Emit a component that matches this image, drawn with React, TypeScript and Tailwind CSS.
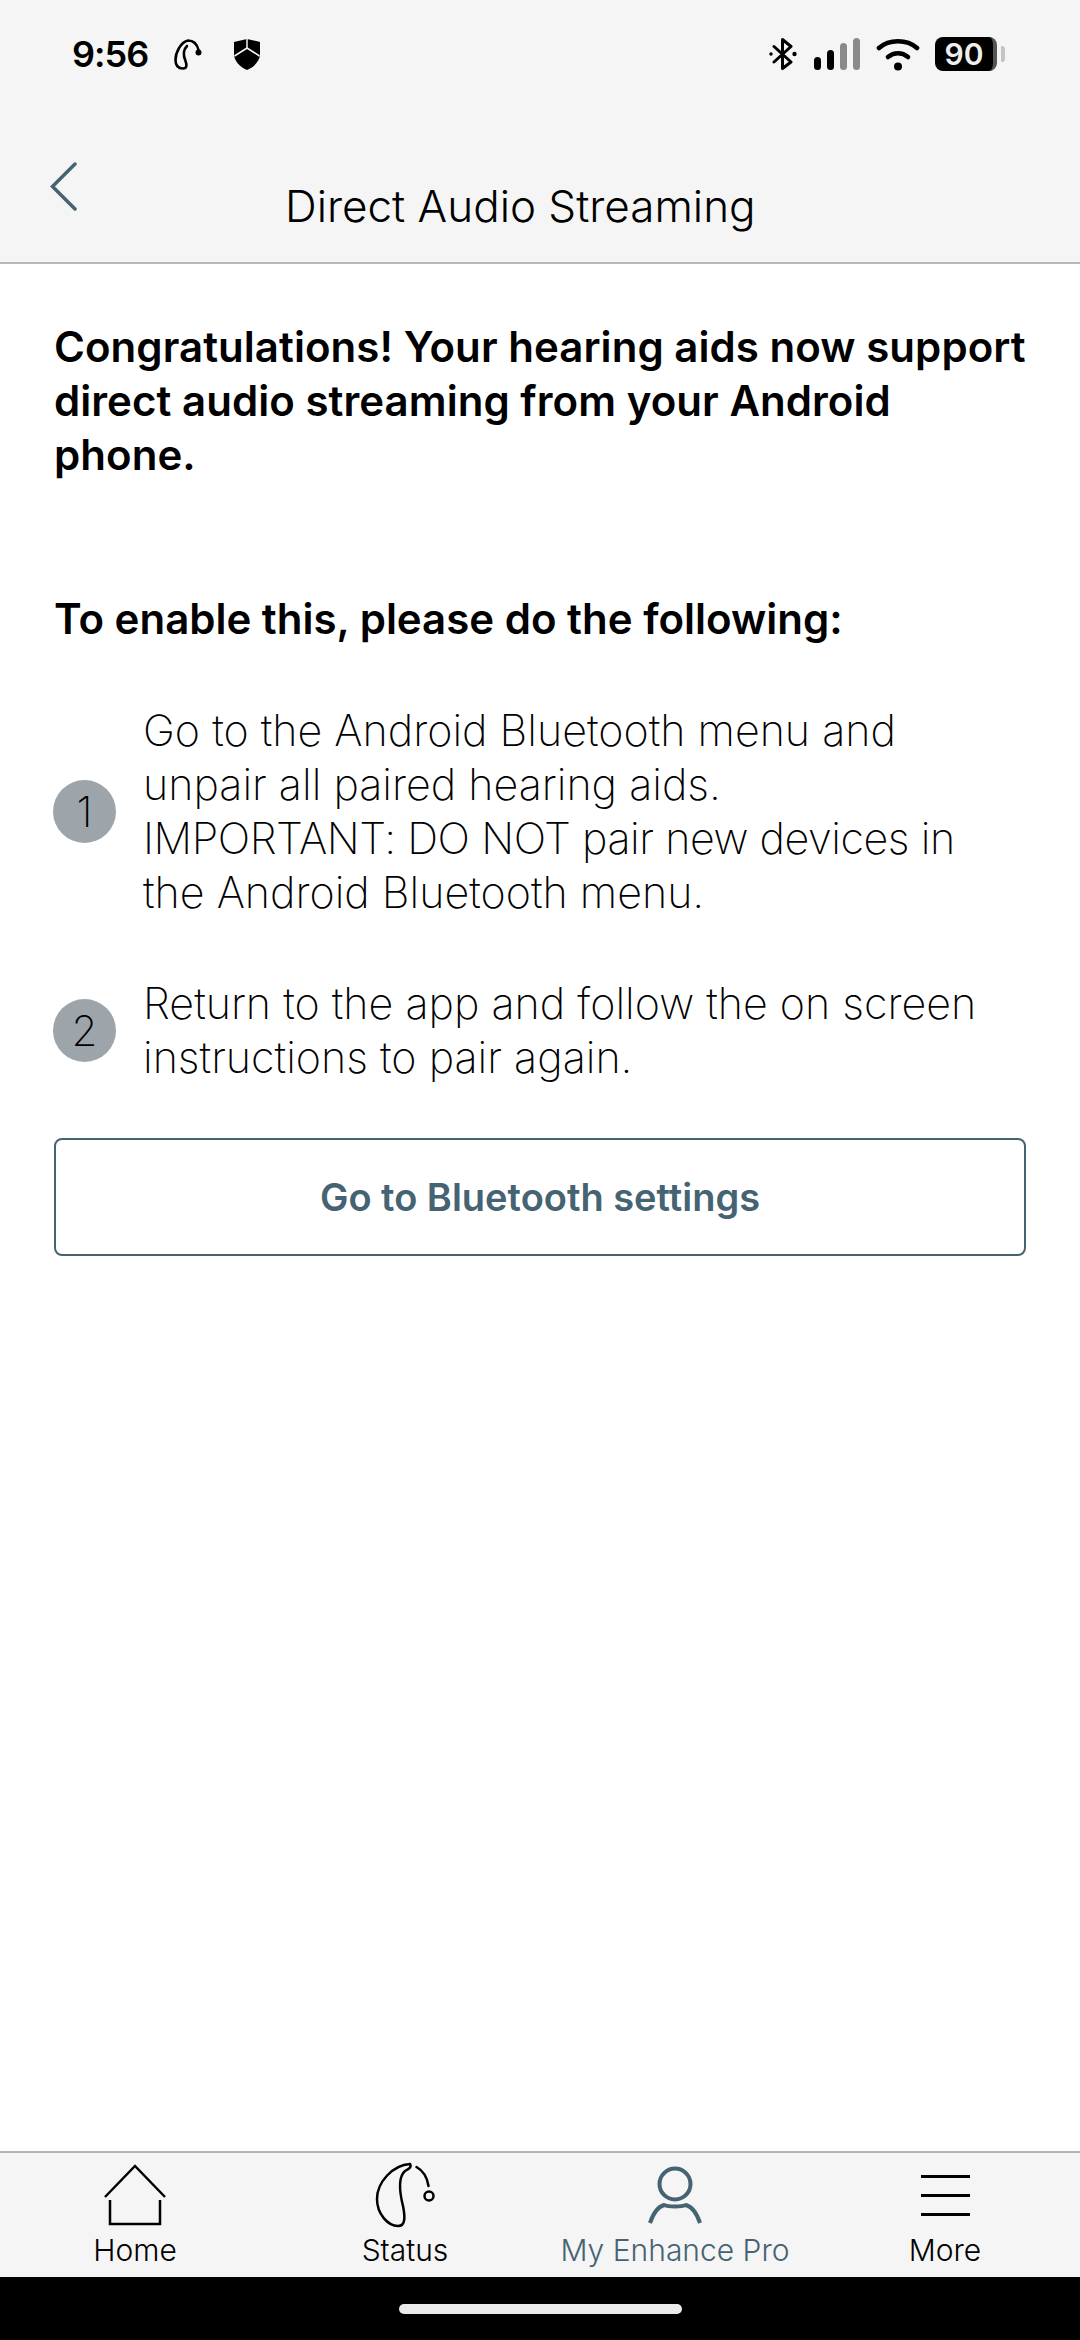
const slate = '#456372'

function BackChevron() {
  return (
    <svg width="30" height="50" viewBox="0 0 30 50" fill="none" stroke="#456372" strokeWidth="3.5" strokeLinecap="round" strokeLinejoin="miter">
      <path d="M26 3 L3.5 25.5 L26 48" />
    </svg>
  )
}

function StatusEar() {
  return (
    <svg width="28" height="31" viewBox="0 0 28 31" fill="none" stroke="#000" strokeWidth="2.6" strokeLinecap="round">
      <path d="M24.5 11 C23 5 19 1.5 14 1.5 C7 3 1.5 13 1.5 21 C1.5 26 4 29.5 9 29.5 C13 29.5 13 26 11.5 22 C9 16 9 11 13 7" />
      <circle cx="24.5" cy="13.5" r="3" fill="#000" stroke="none" />
    </svg>
  )
}

function StatusShield() {
  return (
    <svg width="26" height="31" viewBox="0 0 26 31">
      <path d="M13 0 C17 1 22 2 26 3 L26 15 C26 22 20 28 13 31 C6 28 0 22 0 15 L0 3 C4 2 9 1 13 0 Z" fill="#000" />
      <path d="M13 0 V9 M0.5 17 L13 9 L25.5 17" stroke="#f5f5f5" strokeWidth="1.5" fill="none" />
    </svg>
  )
}

function BluetoothGlyph() {
  return (
    <svg width="28" height="32" viewBox="0 0 28 32" fill="none" stroke="#000" strokeWidth="3" strokeLinejoin="round" strokeLinecap="round">
      <path d="M5 8.5 L22 24 L13.5 30.5 V1.5 L22 8.5 L5 24" />
      <circle cx="2" cy="16" r="1.7" fill="#000" stroke="none" />
      <circle cx="25.5" cy="16" r="2.2" fill="#000" stroke="none" />
    </svg>
  )
}

function SignalBars() {
  return (
    <div className="flex items-end gap-[6px] h-[32px]">
      <div className="w-[7px] h-[13px] rounded-full bg-black" />
      <div className="w-[7px] h-[20px] rounded-full bg-black" />
      <div className="w-[7px] h-[27px] rounded-full bg-[#8a8a8a]" />
      <div className="w-[7px] h-[32px] rounded-full bg-[#8a8a8a]" />
    </div>
  )
}

function WifiGlyph() {
  return (
    <svg width="44" height="33" viewBox="0 0 44 33" fill="none" stroke="#000" strokeLinecap="round">
      <path d="M3 10 C13 1 31 1 41 10" strokeWidth="4.6" />
      <path d="M12 19 C18 14 26 14 32 19" strokeWidth="4.6" />
      <circle cx="22" cy="28.5" r="4" fill="#000" stroke="none" />
    </svg>
  )
}

function BottomTab({ label, active, children }: { label: string; active?: boolean; children: React.ReactNode }) {
  return (
    <div className={`flex-1 flex flex-col items-center ${active ? 'text-[#456372]' : 'text-black'}`}>
      <div className="h-[68px] flex items-center justify-center">{children}</div>
      <span className="mt-[3px] text-[30px] leading-[36px] font-light">{label}</span>
    </div>
  )
}

export default function App() {
  return (
    <div className="w-[1080px] h-[2340px] flex flex-col bg-white text-black font-['Inter',sans-serif]">
      {/* status bar + title */}
      <div className="h-[264px] shrink-0 bg-[#f5f5f5] border-b-2 border-[#b8b8b8] flex flex-col">
        <div className="flex justify-between items-center pl-[72px] pr-[75px] pt-[20px] h-[88px]">
          <div className="flex items-center">
            <span className="text-[36px] leading-[36px] font-semibold tracking-[-1px]">9:56</span>
            <span className="ml-[26px] flex"><StatusEar /></span>
            <span className="ml-[32px] flex"><StatusShield /></span>
          </div>
          <div className="flex items-center">
            <BluetoothGlyph />
            <span className="ml-[17px]"><SignalBars /></span>
            <span className="ml-[16px]"><WifiGlyph /></span>
            <div className="ml-[15px] flex items-center">
              <div className="w-[62px] h-[34px] rounded-[8px] bg-black border-r-[4px] border-[#555555] text-[#eeeeee] text-[30px] leading-[34px] font-semibold text-center">90</div>
              <div className="ml-[4px] w-[4px] h-[16px] bg-[#c4c4c4] rounded-r-[3px]" />
            </div>
          </div>
        </div>
        <div className="relative flex-1 flex items-center pl-[285px]">
          <div className="absolute left-[49px] top-[73px] flex"><BackChevron /></div>
          <span className="mt-[62px] text-[44px] leading-[52px] font-light">Direct Audio Streaming</span>
        </div>
      </div>

      {/* body */}
      <div className="flex-1 px-[54px]">
        <p className="mt-[56px] text-[42px] leading-[54px] font-semibold tracking-[0.05px]">
          Congratulations! Your hearing aids now support direct audio streaming from your Android phone.
        </p>
        <p className="mt-[110px] text-[42px] leading-[54px] font-semibold">To enable this, please do the following:</p>

        <div className="mt-[57px] -ml-[1px] flex items-center gap-[27px]">
          <div className="w-[63px] h-[63px] shrink-0 rounded-full bg-[#9ea5aa] flex items-center justify-center text-[42px] font-extralight">1</div>
          <p className="text-[43px] leading-[54px] font-extralight">
            Go to the Android Bluetooth menu and unpair all paired hearing aids.
            <br />
            <span className="tracking-[-0.45px]">IMPORTANT: DO NOT pair new devices in</span> the Android Bluetooth menu.
          </p>
        </div>
        <div className="mt-[57px] -ml-[1px] flex items-center gap-[27px]">
          <div className="w-[63px] h-[63px] shrink-0 rounded-full bg-[#9ea5aa] flex items-center justify-center text-[42px] font-extralight">2</div>
          <p className="text-[43px] leading-[54px] font-extralight">
            Return to the app and follow the on screen instructions to pair again.
          </p>
        </div>

        <button className="mt-[54px] w-full h-[118px] rounded-[8px] border-2 border-[#456372] bg-white text-[38px] font-semibold" style={{ color: slate }}>
          Go to Bluetooth settings
        </button>
      </div>

      {/* tab bar */}
      <div className="h-[126px] shrink-0 bg-[#f5f5f5] border-t-2 border-[#b4b4b4] flex pt-[8px]">
        <BottomTab label="Home">
          <svg width="64" height="62" viewBox="0 0 64 62" fill="none" stroke="#000" strokeWidth="2.5">
            <path d="M2 33 L32 2 L62 33" />
            <path d="M7 36 V60 H57 V36" />
          </svg>
        </BottomTab>
        <BottomTab label="Status">
          <svg width="60" height="66" viewBox="0 0 60 66" fill="none" stroke="#000" strokeWidth="2.5" strokeLinecap="round">
            <path d="M35 2 C18 3 2 20 2 37 C2 52 13 64 23 64 C31 64 30 54 28 44 C25 32 22 16 30 9 C34 7 37 5 35 2 Z" />
            <path d="M41.5 5 C47 8 52 14 53.5 24" />
            <circle cx="54" cy="34" r="4.5" />
          </svg>
        </BottomTab>
        <BottomTab label="My Enhance Pro" active>
          <svg width="56" height="58" viewBox="0 0 56 58" fill="none" stroke="#456372" strokeWidth="4">
            <circle cx="28" cy="18" r="15.5" />
            <path d="M3 57 C6 48 10 41 17 39 C22 41 34 41 39 39 C46 41 50 48 53 57" />
          </svg>
        </BottomTab>
        <BottomTab label="More">
          <div className="flex flex-col gap-[16px] w-[49px]">
            <div className="h-[3px] bg-black" />
            <div className="h-[3px] bg-black" />
            <div className="h-[3px] bg-black" />
          </div>
        </BottomTab>
      </div>

      {/* home indicator */}
      <div className="h-[63px] shrink-0 bg-black flex justify-center pt-[27px]">
        <div className="w-[283px] h-[10px] rounded-full bg-[#ebebeb]" />
      </div>
    </div>
  )
}
